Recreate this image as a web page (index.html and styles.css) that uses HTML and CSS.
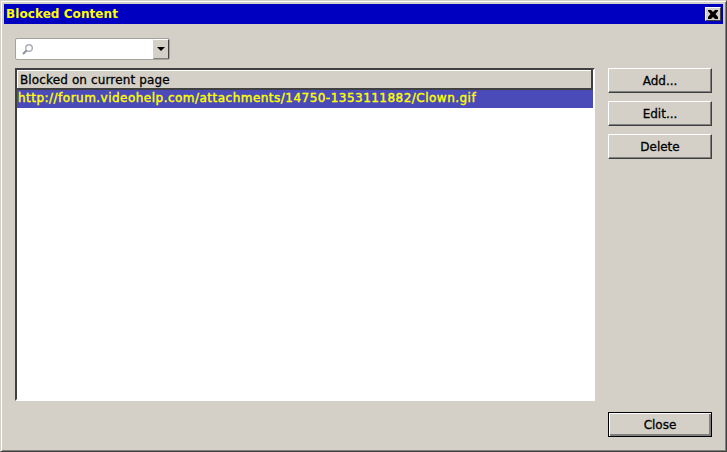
FILE: index.html
```html
<!DOCTYPE html>
<html>
<head>
<meta charset="utf-8">
<title>Blocked Content</title>
<link rel="stylesheet" href="styles.css">
</head>
<body>
<div class="window">
  <div class="titlebar">
    <span class="title">Blocked Content</span>
    <button class="closex" aria-label="Close">
      <svg width="10" height="9" viewBox="0 0 10 9"><path d="M0 0h3l2 2 2-2h3v1L7.500 4 10 7v2H7L5 7 3 9H0V7l2.500-3L0 1z" fill="#000"/></svg>
    </button>
  </div>
  <div class="content">
    <div class="combo">
      <div class="combo-input">
        <svg width="13" height="13" viewBox="0 0 13 13"><circle cx="8" cy="5" r="3.300" fill="none" stroke="#a9adb8" stroke-width="1.400"/><path d="M5.500 7.500 2 11" stroke="#8b90a0" stroke-width="2"/></svg>
      </div>
      <div class="combo-btn"><span class="arrow"></span></div>
    </div>
    <div class="main">
      <div class="list">
        <div class="list-head">Blocked on current page</div>
        <div class="list-row">http://forum.videohelp.com/attachments/14750-1353111882/Clown.gif</div>
      </div>
      <div class="side">
        <button class="btn">Add...</button>
        <button class="btn">Edit...</button>
        <button class="btn">Delete</button>
      </div>
    </div>
    <div class="footer">
      <button class="btn btn-default">Close</button>
    </div>
  </div>
</div>
</body>
</html>
```
FILE: styles.css
```css
* { box-sizing: border-box; }
html, body { margin: 0; padding: 0; height: 100%; }
body { background: #d4d0c8; overflow: hidden; font-family: "DejaVu Sans", sans-serif; font-size: 12px; color: #000; }
.window {
  width: 727px; height: 452px;
  display: flex; flex-direction: column;
  background: #d4d0c8;
  border: 1px solid; border-color: #d4d0c8 #404040 #404040 #d4d0c8;
  box-shadow: inset 1px 1px 0 #fff, inset -1px -1px 0 #808080;
  padding: 3px 3px 0 3px;
}
.titlebar {
  height: 20px; flex: none;
  background: #0000c0;
  display: flex; align-items: center; justify-content: space-between;
  padding: 0 2px 0 2px;
}
.title { color: #ffff00; font-weight: bold; font-size: 12px; letter-spacing: 0.07px; }
.closex {
  width: 16px; height: 14px; padding: 0; margin: 0;
  background: #d4d0c8;
  border: 1px solid; border-color: #fff #404040 #404040 #fff;
  display: flex; align-items: center; justify-content: center;
}
.content { flex: 1; display: flex; flex-direction: column; padding: 14px 11px 14px 11px; min-height: 0; }
.combo {
  width: 155px; height: 22px; flex: none;
  display: flex;
  background: #fff;
  border: 1px solid #a6a39c; border-radius: 2px;
}
.combo-input { flex: 1; display: flex; align-items: center; padding-left: 5px; }
.combo-btn {
  width: 16px; background: #d4d0c8;
  border: 1px solid; border-color: #fff #404040 #808080 #d4d0c8;
  display: flex; align-items: center; justify-content: center;
}
.arrow { width: 0; height: 0; border-left: 4px solid transparent; border-right: 4px solid transparent; border-top: 4px solid #000; }
.main { flex: 1; display: flex; gap: 13px; margin-top: 8px; min-height: 0; }
.list {
  width: 580px; height: 333px;
  background: #fff;
  border: 2px solid; border-color: #404040 #fff #fff #404040;
}
.list-head {
  height: 20px; line-height: 21px; padding-left: 3px;
  background: #d4d0c8;
  border-bottom: 2px solid #404040;
  border-right: 2px solid #404040;
  box-shadow: inset 1px 1px 0 #fff;
  -webkit-text-stroke: 0.3px #000;
  letter-spacing: 0.13px;
}
.list-row {
  height: 18px; line-height: 17px; padding-left: 1px;
  background: #4a4ab8; color: #ffff00;
  white-space: nowrap;
  -webkit-text-stroke: 0.4px #ffff00;
  letter-spacing: 0.48px;
}
.side { width: 104px; display: flex; flex-direction: column; gap: 8px; }
.btn {
  width: 104px; height: 25px; padding: 0;
  background: #d4d0c8;
  font: 12px "DejaVu Sans", sans-serif; color: #000;
  -webkit-text-stroke: 0.3px #000;
  border: 1px solid; border-color: #fff #404040 #404040 #fff;
  box-shadow: inset -1px -1px 0 #808080;
}
.footer { flex: none; display: flex; justify-content: flex-end; }
.btn-default { border: 1px solid #000; box-shadow: inset 1px 1px 0 #fff, inset -2px -2px 0 #808080; }
```
